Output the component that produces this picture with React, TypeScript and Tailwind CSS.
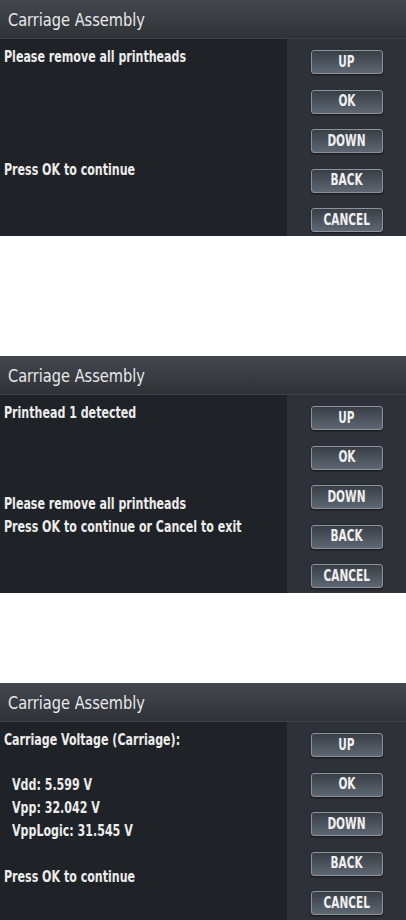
import React from "react";

const font = { fontFamily: '"DejaVu Sans Condensed", "DejaVu Sans", sans-serif' };

function SideButton({ label }: { label: string }) {
  return (
    <div className="w-[72px] h-[24px] rounded-[3px] border border-[#8c939b] bg-gradient-to-b from-[#393f47] to-[#5e6772] shadow-[0_1px_2px_rgba(0,0,0,0.6)] flex items-center justify-center">
      <span className="inline-block scale-x-[0.78] text-[15px] font-bold text-[#f0f0f0] leading-none whitespace-nowrap">
        {label}
      </span>
    </div>
  );
}

function Line({ children, className = "" }: { children: React.ReactNode; className?: string }) {
  return (
    <div className={`h-[23px] flex items-center ${className}`}>
      <span className="inline-block origin-left scale-x-[0.82] whitespace-nowrap">{children}</span>
    </div>
  );
}

function Screen({ height, children }: { height: number; children: React.ReactNode }) {
  return (
    <div className="w-[406px] flex flex-col" style={{ height }}>
      <div className="h-[39px] bg-gradient-to-b from-[#44474e] to-[#2f3237] border-b border-[#3d4046] flex items-center pl-2">
        <span className="inline-block origin-left scale-x-[0.9] text-[18px] text-[#e9e9ea] whitespace-nowrap">
          Carriage Assembly
        </span>
      </div>
      <div className="flex-1 flex">
        <div className="w-[287px] bg-[#1f2227] text-[15px] font-bold text-[#ececec] pl-1">{children}</div>
        <div className="flex-1 bg-[#2e3238] flex flex-col items-center pt-[11px] gap-[15.5px]">
          <SideButton label="UP" />
          <SideButton label="OK" />
          <SideButton label="DOWN" />
          <SideButton label="BACK" />
          <SideButton label="CANCEL" />
        </div>
      </div>
    </div>
  );
}

export default function App() {
  return (
    <div className="w-[406px] h-[920px] bg-white flex flex-col" style={font}>
      <Screen height={236}>
        <Line className="mt-[7px]">Please remove all printheads</Line>
        <Line className="mt-[90px]">Press OK to continue</Line>
      </Screen>
      <div className="h-[120px]" />
      <Screen height={237}>
        <Line className="mt-[7px]">Printhead 1 detected</Line>
        <Line className="mt-[68px]">Please remove all printheads</Line>
        <Line>Press OK to continue or Cancel to exit</Line>
      </Screen>
      <div className="h-[90px]" />
      <Screen height={237}>
        <Line className="mt-[7px]">Carriage Voltage (Carriage):</Line>
        <div className="pl-2 mt-[22px]">
          <Line className="h-[22.5px]">Vdd: 5.599 V</Line>
          <Line className="h-[22.5px]">Vpp: 32.042 V</Line>
          <Line className="h-[22.5px]">VppLogic: 31.545 V</Line>
        </div>
        <Line className="mt-[23px]">Press OK to continue</Line>
      </Screen>
    </div>
  );
}
